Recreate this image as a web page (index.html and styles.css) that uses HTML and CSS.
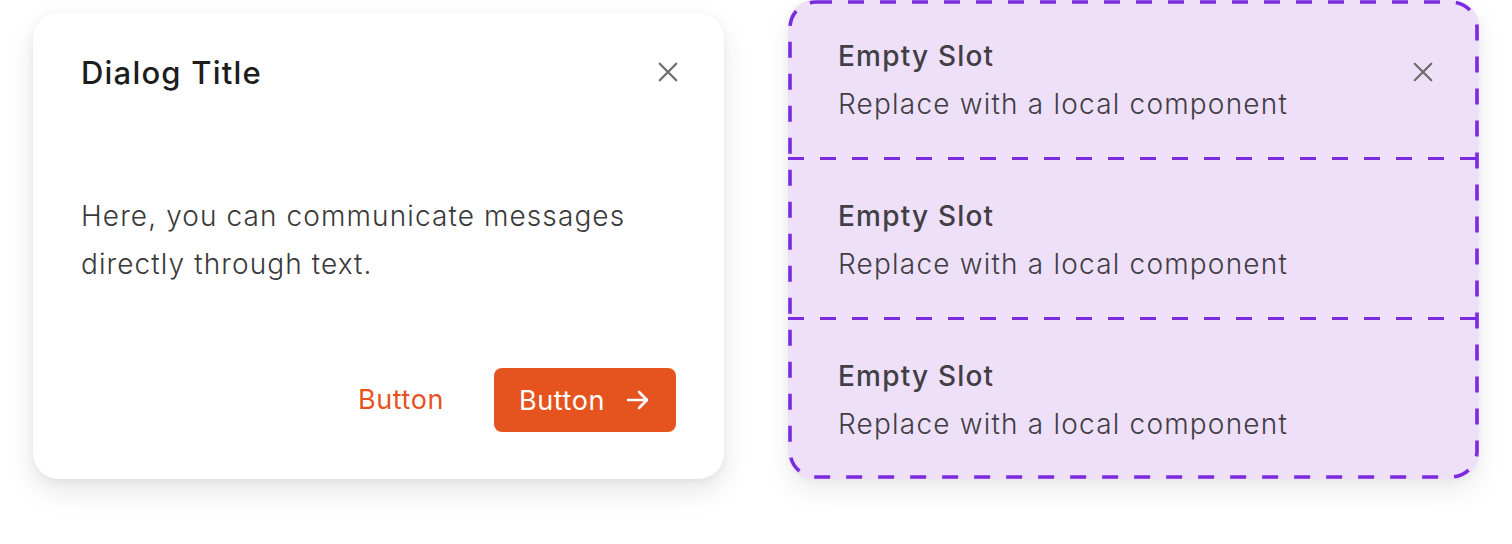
FILE: index.html
```html
<!DOCTYPE html>
<html>
<head>
<meta charset="utf-8">
<link rel="stylesheet" href="styles.css">
</head>
<body>
<div class="stage">
  <div class="dialog">
    <div class="dialog-header">
      <div class="dialog-title">Dialog Title</div>
      <span class="close">
        <svg width="24" height="24" viewBox="0 0 24 24"><path d="M3 3 L21 21 M21 3 L3 21" stroke="#6b6b6b" stroke-width="2.4" stroke-linecap="round" fill="none"/></svg>
      </span>
    </div>
    <p class="dialog-body">Here, you can communicate messages directly through text.</p>
    <div class="dialog-footer">
      <span class="btn-text">Button</span>
      <span class="btn-primary">Button
        <svg width="24" height="24" viewBox="0 0 24 24"><path d="M2 12 H21 M13 4 L21 12 L13 20" stroke="#fff" stroke-width="2.6" stroke-linecap="round" stroke-linejoin="round" fill="none"/></svg>
      </span>
    </div>
  </div>

  <div class="slots">
    <svg class="slots-outline" width="691" height="479" viewBox="0 0 691 479"><rect x="2" y="2" width="687" height="475" rx="26" ry="26" fill="none" stroke="#7a2ae0" stroke-width="3.6" stroke-dasharray="16 16"/></svg>
    <div class="slot">
      <div class="slot-text">
        <div class="slot-title">Empty Slot</div>
        <div class="slot-sub">Replace with a local component</div>
      </div>
      <span class="close slot-close">
        <svg width="24" height="24" viewBox="0 0 24 24"><path d="M3 3 L21 21 M21 3 L3 21" stroke="#6b6b6b" stroke-width="2.4" stroke-linecap="round" fill="none"/></svg>
      </span>
    </div>
    <div class="slot">
      <div class="slot-text">
        <div class="slot-title">Empty Slot</div>
        <div class="slot-sub">Replace with a local component</div>
      </div>
    </div>
    <div class="slot slot-last">
      <div class="slot-text">
        <div class="slot-title">Empty Slot</div>
        <div class="slot-sub">Replace with a local component</div>
      </div>
    </div>
  </div>
</div>
</body>
</html>
```

FILE: styles.css
```css
* { box-sizing: border-box; }
html, body { margin: 0; padding: 0; background: #ffffff; }
body {
  font-family: Inter, "Noto Sans", "Liberation Sans", sans-serif;
  width: 1512px;
  height: 544px;
  overflow: hidden;
}
.stage {
  display: flex;
  align-items: flex-end;
  gap: 64px;
  padding: 0 33px;
  height: 479px;
}
.dialog {
  width: 691px;
  height: 466px;
  background: #fff;
  border-radius: 26px;
  box-shadow: 0 12px 28px rgba(0,0,0,0.10), 0 2px 8px rgba(0,0,0,0.05);
  padding: 35px 44px 47px 48px;
  display: flex;
  flex-direction: column;
}
.dialog-header {
  height: 48px;
  display: flex;
  align-items: center;
  justify-content: space-between;
}
.dialog-title {
  font-size: 31px;
  font-weight: 500;
  color: #1d1d1d;
  letter-spacing: 1.2px;
}
.close {
  width: 24px;
  height: 24px;
  display: flex;
}
.close svg { width: 22px; height: 22px; margin: 1px; }
.dialog-body {
  margin: 96px 0 0 0;
  font-size: 28px;
  font-weight: 300;
  line-height: 48px;
  color: #3a3a3a;
  letter-spacing: 1.1px;
  max-width: 590px;
}
.dialog-footer {
  margin-top: auto;
  display: flex;
  justify-content: flex-end;
  align-items: center;
  gap: 26px;
  padding-right: 4px;
}
.btn-text {
  font-size: 27px;
  font-weight: 400;
  color: #e5541f;
  letter-spacing: 0.6px;
  padding: 0 24px;
  line-height: 64px;
}
.btn-primary {
  height: 64px;
  width: 182px;
  background: #e5541f;
  border-radius: 8px;
  color: #fff;
  font-size: 27px;
  font-weight: 400;
  letter-spacing: 0.6px;
  display: flex;
  align-items: center;
  padding: 0 26px 0 25px;
  justify-content: space-between;
}
.btn-primary svg { width: 24px; height: 24px; }
.slots {
  position: relative;
  width: 691px;
  height: 479px;
  background: #ede0f8;
  border-radius: 26px;
  box-shadow: 0 12px 28px rgba(0,0,0,0.08), 0 2px 8px rgba(0,0,0,0.04);
  display: flex;
  flex-direction: column;
}
.slots-outline {
  position: absolute;
  left: 0;
  top: 0;
  pointer-events: none;
}
.slot {
  height: 160px;
  display: flex;
  justify-content: space-between;
  align-items: flex-start;
  padding: 32px 44px 0 50px;
  background-image: repeating-linear-gradient(to right, #7a2ae0 0 16px, transparent 16px 32px);
  background-size: 100% 4px;
  background-position: 0 157px;
  background-repeat: no-repeat;
}
.slot-last { height: 159px; background-image: none; }
.slot-title {
  font-size: 28px;
  font-weight: 500;
  line-height: 48px;
  letter-spacing: 1.2px;
  color: #423e45;
}
.slot-sub {
  font-size: 28px;
  font-weight: 300;
  line-height: 48px;
  letter-spacing: 1.2px;
  color: #423e45;
}
.slot-close { margin-top: 28px; }
```
